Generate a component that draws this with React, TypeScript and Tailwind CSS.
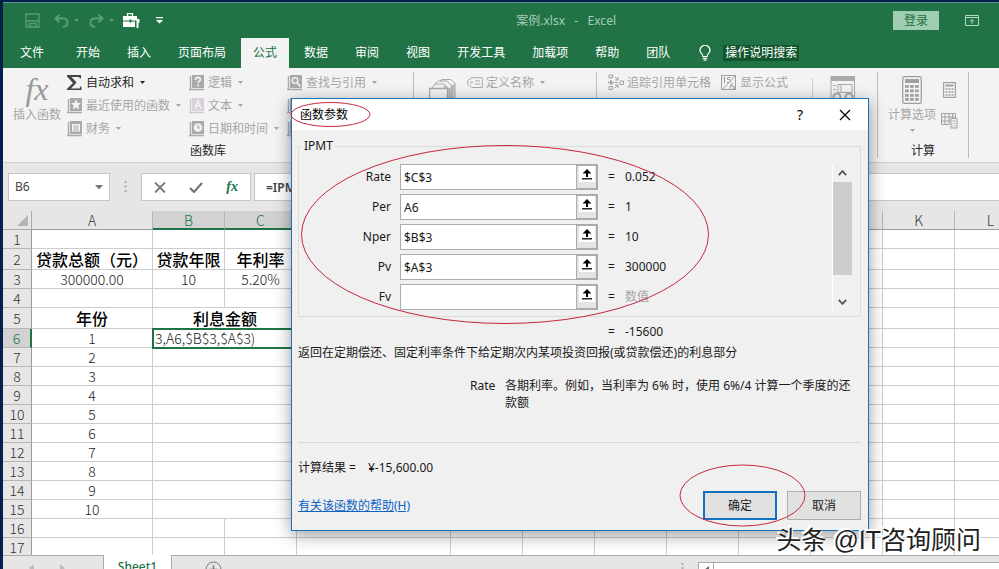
import React from "react";

/* -------------------------------------------------------------------------- */
/*                                   DATA                                     */
/* -------------------------------------------------------------------------- */

const tabs = [
  "开始",
  "插入",
  "页面布局",
  "公式",
  "数据",
  "审阅",
  "视图",
  "开发工具",
  "加载项",
  "帮助",
  "团队",
];

// the last column takes whatever room is left
const columns = [
  { key: "A", width: "w-[121px]" },
  { key: "B", width: "w-[72px]" },
  { key: "C", width: "w-[72px]" },
  { key: "D", width: "w-[154px]" },
  { key: "E", width: "w-[72px]" },
  { key: "F", width: "w-[72px]" },
  { key: "G", width: "w-[72px]" },
  { key: "H", width: "w-[72px]" },
  { key: "I", width: "w-[72px]" },
  { key: "J", width: "w-[72px]" },
  { key: "K", width: "w-[72px]" },
  { key: "L", width: "" },
];

const rows = Array.from({ length: 17 }, (_, i) => i + 1);

const cells: Record<string, string> = {
  A2: "贷款总额（元）",
  B2: "贷款年限",
  C2: "年利率",
  A3: "300000.00",
  B3: "10",
  C3: "5.20%",
  A5: "年份",
  B5: "利息金额",
  A6: "1",
  B6: "3,A6,$B$3,$A$3)",
  A7: "2",
  A8: "3",
  A9: "4",
  A10: "5",
  A11: "6",
  A12: "7",
  A13: "8",
  A14: "9",
  A15: "10",
};

const args = [
  { name: "Rate", value: "$C$3", result: "0.052" },
  { name: "Per", value: "A6", result: "1" },
  { name: "Nper", value: "$B$3", result: "10" },
  { name: "Pv", value: "$A$3", result: "300000" },
  { name: "Fv", value: "", result: "数值" },
];

/* -------------------------------------------------------------------------- */
/*                                   ICONS                                    */
/* -------------------------------------------------------------------------- */

const Caret = ({ className = "" }: { className?: string }) => (
  <svg width="5" height="3" viewBox="0 0 5 3" className={`shrink-0 ${className}`}>
    <path d="M0 0h5L2.5 3z" fill="currentColor" />
  </svg>
);

const Book = ({ children }: { children?: React.ReactNode }) => (
  <svg width="16" height="16" viewBox="0 0 16 16" className="shrink-0">
    <path d="M1.5 1v13.5M0 14.5h15" stroke="#a9a9a9" strokeWidth="1.4" fill="none" />
    <rect x="3" y="0" width="12" height="13" fill="#a9a9a9" />
    {children}
  </svg>
);

const StarBook = () => (
  <Book>
    <path d="M9 1.500l1.500 3.300 3.500.4-2.600 2.400.7 3.600L9 9.400l-3.100 1.800.7-3.600L4 5.200l3.500-.4z" fill="#f3f3f3" />
  </Book>
);

const MoneyBook = () => (
  <Book>
    <rect x="5" y="3" width="8" height="7.5" fill="#f3f3f3" />
    <path d="M6.5 5h5M6.5 7h5M6.5 9h5" stroke="#a9a9a9" strokeWidth="1" />
  </Book>
);

const LogicBook = () => (
  <Book>
    <path d="M6.500 5c0-3.500 5-3.200 5-.5C11.500 6.200 9 6 9 8.200M9 9.500v1.800" stroke="#f3f3f3" strokeWidth="1.700" fill="none" />
  </Book>
);

const TextBook = () => (
  <svg width="16" height="16" viewBox="0 0 16 16" className="shrink-0">
    <path d="M1.5 1v13.500M0 14.500h15" stroke="#d3c8d3" strokeWidth="1.400" fill="none" />
    <rect x="3" y="0" width="12" height="13" fill="#d9d0d9" />
    <path d="M5.800 11L9 2.500l3.200 8.500M7 8h4" stroke="#f3f3f3" strokeWidth="1.300" fill="none" />
  </svg>
);

const ClockBook = () => (
  <Book>
    <circle cx="9" cy="6.500" r="4.300" fill="#f3f3f3" />
    <path d="M9 4v3h2.300" stroke="#a9a9a9" strokeWidth="1.200" fill="none" />
  </Book>
);

const LookupBook = () => (
  <Book>
    <circle cx="8" cy="5.500" r="2.800" stroke="#f3f3f3" strokeWidth="1.300" fill="none" />
    <path d="M10 7.500l3.500 4" stroke="#f3f3f3" strokeWidth="1.600" />
  </Book>
);

const Sigma = () => (
  <svg width="16" height="16" viewBox="0 0 16 16" className="shrink-0">
    <path d="M0 0h14v3.500h-1L12 2H4.500l5 5.500-5.500 6h8.500l1-2h1V15H0v-1.200L6 8 0 1.500z" fill="#444" />
  </svg>
);

const TagIcon = () => (
  <svg width="16" height="12" viewBox="0 0 16 12" fill="none" stroke="#a9a9a9" className="shrink-0">
    <path d="M5 .7h10.300v9.800H5L.7 7.500V3.700z" />
    <circle cx="4.500" cy="5.500" r="1" />
    <path d="M8 4h5M8 7h5" />
  </svg>
);

const TraceIcon = () => (
  <svg width="16" height="17" viewBox="0 0 16 17" fill="none" stroke="#a0a0a0" className="shrink-0">
    <path d="M1 1h3.500v3H1zM1 12.500h3.500v3H1zM12 7h3.500v3.500H12z" />
    <path d="M0 8.500h6M3 6v5" strokeWidth="1.500" />
    <path d="M7 3l3 3M10 3v3H7M7 14l3-3M7 11h3v3M7 8.500h3" />
  </svg>
);

const ShowFormulaIcon = () => (
  <svg width="16" height="16" viewBox="0 0 16 16" fill="none" stroke="#a0a0a0" className="shrink-0">
    <rect x=".5" y=".5" width="14" height="14" />
    <path d="M15 0L1 15" />
    <path d="M3.500 2v6M2 3.500l1.500-1.500M9.500 2.500H6.500v2h2q1 0 1 1.200T8.300 7.500H6" />
    <path d="M8 13.500q1.500 0 2-2.800T12 8M9 10.500h3M11.500 10.500l3 4M14.500 10.500l-3 4" />
  </svg>
);

const NameManagerIcon = () => (
  <svg width="28" height="28" viewBox="0 0 28 28" fill="none" stroke="#a9a9a9">
    <path d="M.5 27V9.500h18V27" strokeWidth="1.500" />
    <path d="M3 9l3-4h9l6 6v13M6 5l3-3h9l5 5v14M11 2l2-1.500h9l4 4V20" />
    <path d="M19 10l7-6v14l-7 8z" fill="#a9a9a9" stroke="none" opacity=".6" />
    <circle cx="16" cy="8" r="1" />
  </svg>
);

const WatchIcon = () => (
  <svg width="26" height="28" viewBox="0 0 26 28" fill="none" stroke="#a9a9a9">
    <rect x="1" y=".5" width="23.500" height="22" />
    <rect x="1" y="0" width="24" height="5" fill="#a9a9a9" stroke="none" />
    <path d="M8 8.500h14v8H8zM3 9.500h3M3 13.500h3M11 9v7" />
    <circle cx="7" cy="21" r="3.500" strokeWidth="2" />
    <circle cx="19" cy="21" r="3.500" strokeWidth="2" />
  </svg>
);

const Calculator = () => (
  <svg width="20" height="28" viewBox="0 0 20 28">
    <rect x=".7" y=".7" width="18.600" height="26.600" rx="2" fill="none" stroke="#a0a0a0" strokeWidth="1.300" />
    <rect x="3" y="3" width="14" height="4" fill="#a0a0a0" />
    {[9, 13.5, 18, 22].map((y) =>
      [3, 8, 13].map((x) => (
        <rect key={`${x}-${y}`} x={x} y={y} width="3.800" height="2.800" fill="#a0a0a0" />
      ))
    )}
  </svg>
);

const SmallCalculator = () => (
  <svg width="13" height="16" viewBox="0 0 13 16" fill="none" stroke="#a0a0a0">
    <rect x=".6" y=".6" width="11.800" height="14.800" strokeWidth="1.200" />
    <path d="M2.500 3.500h8" strokeWidth="2" />
    <path d="M2.500 7h2M5.500 7h2M8.500 7h2M2.500 10h2M5.500 10h2M8.500 10h2M2.500 13h2M5.500 13h2M8.500 13h2" strokeWidth="1.600" />
  </svg>
);

const CalcSheet = () => (
  <svg width="17" height="17" viewBox="0 0 17 17" fill="none" stroke="#a0a0a0">
    <path d="M8 12.500H.5V1.500h14V6M.5 5h14M.5 9h9M4 1.500v11M8 1.500v11M11.500 1.500V6" />
    <rect x="10" y="6.500" width="6" height="9.500" fill="#f3f3f3" />
    <path d="M11.500 9h3M11.500 11.500h1M13.500 11.500h1M11.500 14h1M13.500 14h1" />
  </svg>
);

const UpArrow = () => (
  <svg width="10" height="11" viewBox="0 0 10 11">
    <path d="M5 0l4.500 4.500H6V8H4V4.500H.5z" fill="#000" />
    <path d="M0 9.800h10" stroke="#000" strokeWidth="1.300" />
  </svg>
);

/* -------------------------------------------------------------------------- */
/*                                TITLE + TABS                                */
/* -------------------------------------------------------------------------- */

const TitleBar = () => (
  <header className="flex h-[35px] items-center bg-[#217346] text-[#5b9b77]">
    <div className="flex min-w-0 flex-1 items-center pl-[22px]">
      <button aria-label="保存">
        <svg width="15" height="15" viewBox="0 0 15 15" fill="none" stroke="currentColor" strokeWidth="1.300">
          <path d="M1 1h13v13H1zM1 8h13M4 14v-3.500h7V14M6 12v2" />
        </svg>
      </button>
      <button aria-label="撤消" className="ml-[14px] flex items-center gap-[5px]">
        <svg width="15" height="14" viewBox="0 0 15 14" fill="none" stroke="currentColor" strokeWidth="2">
          <path d="M5.500 .8L1.500 4.500l4 3.800M2 4.500h7.500q4 .3 4 4T9 13" />
        </svg>
        <Caret />
      </button>
      <button aria-label="恢复" className="ml-[10px] flex items-center gap-[5px]">
        <svg width="15" height="14" viewBox="0 0 15 14" fill="none" stroke="currentColor" strokeWidth="2">
          <path d="M9.500 .8l4 3.700-4 3.800M13 4.500H5.500q-4 .3-4 4T6 13" />
        </svg>
        <Caret />
      </button>
      <button aria-label="工具箱" className="ml-[9px] text-white">
        <svg width="17" height="15" viewBox="0 0 17 15" fill="none">
          <path d="M4.500 3V.7h5V3" stroke="currentColor" strokeWidth="1.300" />
          <path d="M0 3h14v4.500H8.500v-1h-2v1H0zM0 8.500h6.500v1h2v-1H12V14H0zM13.500 6h3v3.500h-1V15h-2z" fill="currentColor" />
        </svg>
      </button>
      <button aria-label="自定义快速访问工具栏" className="ml-[16px] text-white">
        <svg width="7" height="7" viewBox="0 0 7 7">
          <path d="M0 0h7v1.300H0zM0 3h7L3.500 6.500z" fill="currentColor" />
        </svg>
      </button>
    </div>
    <h1 className="whitespace-pre text-xs text-[#a5cdb6]">案例.xlsx   -   Excel</h1>
    <div className="flex w-[383px] items-center justify-end">
      <button className="h-[19px] w-[46px] bg-[#9fcdb1] text-xs leading-[19px] text-[#1f6e43]">
        登录
      </button>
      <button aria-label="功能区显示选项" className="mr-[20px] ml-[26px] text-[#b4d6c2]">
        <svg width="14" height="11" viewBox="0 0 14 11" fill="none" stroke="currentColor">
          <path d="M.5 .5h13v10H.5zM.5 2.500h13M7 9V4.500M5 6.500l2-2 2 2" />
        </svg>
      </button>
    </div>
  </header>
);

const TabBar = () => (
  <nav className="flex h-[30px] items-stretch gap-[3px] bg-[#217346] text-xs whitespace-nowrap text-white">
    <button className="px-[17px]">文件</button>
    {tabs.map((t) => (
      <button
        key={t}
        className={t === "公式" ? "bg-[#f3f3f3] px-3 text-[#217346]" : "px-3"}
      >
        {t}
      </button>
    ))}
    <button className="ml-[14px] flex items-center gap-[12px]">
      <svg width="12" height="16" viewBox="0 0 12 16" fill="none" stroke="currentColor" strokeWidth="1.200">
        <path d="M3.800 11.500q0-2-1.700-3.600A4.800 4.800 0 1 1 9.900 7.900Q8.200 9.500 8.200 11.500zM3.800 13.300h4.400M4.500 15.200h3" />
      </svg>
      <span className="bg-[#12562e] px-[2px] leading-4">操作说明搜索</span>
    </button>
  </nav>
);

/* -------------------------------------------------------------------------- */
/*                                   RIBBON                                   */
/* -------------------------------------------------------------------------- */

const Tool = ({
  icon,
  label,
  caret = true,
  active = false,
}: {
  icon: React.ReactNode;
  label?: string;
  caret?: boolean;
  active?: boolean;
}) => (
  <button
    className={`flex h-[23px] items-center gap-[3px] whitespace-nowrap ${
      active ? "text-[#262626]" : "text-[#a6a6a6]"
    }`}
  >
    {icon}
    {label}
    {label && caret && <Caret className="ml-[3px]" />}
  </button>
);

const Divider = () => <div className="my-1 w-px shrink-0 bg-[#bdbdbd]" />;

const Ribbon = () => (
  <section className="flex h-[95px] items-stretch border-b border-[#cfcfcf] bg-[#f3f3f3] text-xs text-[#262626]">
    <div className="w-[410px] shrink-0">
      <div className="flex h-[72px] pt-[3px] pl-[10px]">
        <button className="flex w-12 flex-col items-center text-[#a6a6a6]">
          <span className="h-9 font-['Liberation_Serif',serif] text-[32px] leading-9 text-[#999] italic">
            fx
          </span>
          <span className="leading-4">插入函数</span>
        </button>
        <div className="ml-[6px] w-[122px]">
          <Tool icon={<Sigma />} label="自动求和" active />
          <Tool icon={<StarBook />} label="最近使用的函数" />
          <Tool icon={<MoneyBook />} label="财务" />
        </div>
        <div className="w-[98px]">
          <Tool icon={<LogicBook />} label="逻辑" />
          <Tool icon={<TextBook />} label="文本" />
          <Tool icon={<ClockBook />} label="日期和时间" />
        </div>
        <div>
          <Tool icon={<LookupBook />} label="查找与引用" />
          <Tool icon={<Book />} />
          <Tool icon={<Book />} />
        </div>
      </div>
      <p className="text-center leading-[22px]">函数库</p>
    </div>
    <Divider />
    <div className="flex w-[182px] shrink-0 items-start pl-[15px]">
      <div className="pt-[11px]">
        <NameManagerIcon />
      </div>
      <div className="ml-[10px] pt-[3px]">
        <Tool icon={<TagIcon />} label="定义名称" />
      </div>
    </div>
    <Divider />
    <div className="flex w-[280px] shrink-0 items-start pt-[3px] pl-[11px]">
      <div className="w-[113px]">
        <Tool icon={<TraceIcon />} label="追踪引用单元格" caret={false} />
      </div>
      <div className="w-[91px]">
        <Tool icon={<ShowFormulaIcon />} label="显示公式" caret={false} />
      </div>
      <div className="mt-[7px] h-16 w-px bg-[#cfcfcf]" />
      <div className="pt-[5px] pl-[17px]">
        <WatchIcon />
      </div>
    </div>
    <Divider />
    <div className="w-[90px] shrink-0">
      <div className="flex h-[72px] gap-[5px] pt-2 pl-[10px]">
        <button className="flex w-12 flex-col items-center text-[#a6a6a6]">
          <Calculator />
          <span className="mt-[3px] leading-4">计算选项</span>
          <Caret className="mt-[6px]" />
        </button>
        <div className="flex flex-col items-center gap-[14px] pt-[6px]">
          <SmallCalculator />
          <CalcSheet />
        </div>
      </div>
      <p className="text-center leading-[22px]">计算</p>
    </div>
    <Divider />
  </section>
);

/* -------------------------------------------------------------------------- */
/*                                FORMULA BAR                                 */
/* -------------------------------------------------------------------------- */

const FormulaBar = () => (
  <div className="flex h-12 items-start bg-[#e6e6e6] pt-[10px] pl-[5px] text-xs text-[#444]">
    <div className="flex h-[28px] w-[102px] shrink-0 items-center border border-[#c6c6c6] bg-white px-[6px]">
      <input aria-label="名称框" defaultValue="B6" className="min-w-0 flex-1" />
      <svg width="8" height="5" viewBox="0 0 8 5">
        <path d="M0 0h8L4 4.500z" fill="#777" />
      </svg>
    </div>
    <svg width="3" height="12" viewBox="0 0 3 12" className="mx-[14px] mt-2 shrink-0">
      <path d="M.5 1h2M.5 5.500h2M.5 10h2" stroke="#9a9a9a" strokeWidth="1.500" />
    </svg>
    <div className="flex h-[28px] w-[110px] shrink-0 items-center justify-between border border-[#c6c6c6] bg-white px-[12px]">
      <button aria-label="取消输入">
        <svg width="12" height="11" viewBox="0 0 12 11">
          <path d="M1 .5l10 10M11 .5l-10 10" stroke="#777" strokeWidth="1.800" />
        </svg>
      </button>
      <button aria-label="输入">
        <svg width="14" height="11" viewBox="0 0 14 11">
          <path d="M1 6l4 4 8-9" fill="none" stroke="#777" strokeWidth="2.200" />
        </svg>
      </button>
      <button
        aria-label="插入函数"
        className="font-['Liberation_Serif',serif] text-sm leading-4 font-bold text-[#217346] italic"
      >
        fx
      </button>
    </div>
    <input
      aria-label="编辑栏"
      defaultValue="=IPMT($C$3,A6,$B$3,$A$3)"
      className="ml-[3px] h-[28px] min-w-0 flex-1 border border-r-0 border-[#c6c6c6] bg-white pl-[11px] font-semibold"
    />
  </div>
);

/* -------------------------------------------------------------------------- */
/*                                   SHEET                                    */
/* -------------------------------------------------------------------------- */

const cellClass = (id: string, row: number, col: string) => {
  const base = "overflow-hidden border-b border-[#cdcdcd] p-0 text-center whitespace-nowrap";
  // B and C are merged from row 5 down to row 15
  const side = col === "B" && row >= 5 && row <= 15 ? "" : "border-r";
  if (id === "B6") {
    return `${base} relative border-r bg-white pl-[2px] text-left outline-2 -outline-offset-1 outline-[#217346]`;
  }
  if (row === 2 || row === 5) return `${base} ${side} text-base leading-4 font-medium text-black`;
  return `${base} ${side}`;
};

const Sheet = () => (
  <main className="min-h-0 flex-1 overflow-hidden bg-white">
    <table className="w-full min-w-[1024px] table-fixed border-separate border-spacing-0 font-['Noto_Sans_CJK_SC',sans-serif] text-sm leading-4 font-light text-[#222]">
      <colgroup>
        <col className="w-[29px]" />
        {columns.map((c) => (
          <col key={c.key} className={c.width} />
        ))}
      </colgroup>
      <thead>
        <tr className="h-[19px] bg-[#e6e6e6]">
          <th className="border-r border-b border-[#ababab] p-0">
            <svg width="11" height="11" viewBox="0 0 11 11" className="mr-[3px] ml-auto">
              <path d="M11 0v11H0z" fill="#b4b4b4" />
            </svg>
          </th>
          {columns.map((c) => (
            <th
              key={c.key}
              className={
                c.key === "B" || c.key === "C"
                  ? "border-r border-b-2 border-r-[#b5b5b5] border-b-[#217346] bg-[#d2d2d2] p-0 font-light text-[#217346]"
                  : "border-r border-b border-r-[#b5b5b5] border-b-[#9b9b9b] p-0 font-light text-[#333]"
              }
            >
              {c.key}
            </th>
          ))}
        </tr>
      </thead>
      <tbody>
        {rows.map((r) => (
          <tr key={r} className={r === 2 || r === 5 ? "h-[21px]" : "h-[19px]"}>
            <th
              className={
                r === 6
                  ? "border-r-2 border-b border-r-[#217346] border-b-[#b5b5b5] bg-[#d2d2d2] p-0 font-light text-[#217346]"
                  : "border-r border-b border-r-[#9b9b9b] border-b-[#b5b5b5] bg-[#e6e6e6] p-0 font-light text-[#333]"
              }
            >
              {r}
            </th>
            {columns.map((c) => {
              const id = c.key + r;
              if (c.key === "C" && (r === 5 || r === 6)) return null;
              return (
                <td
                  key={id}
                  colSpan={id === "B5" || id === "B6" ? 2 : 1}
                  className={cellClass(id, r, c.key)}
                >
                  {cells[id]}
                </td>
              );
            })}
          </tr>
        ))}
      </tbody>
    </table>
  </main>
);

const SheetTabs = () => (
  <footer className="h-[14px] shrink-0 overflow-hidden bg-[#e6e6e6] text-xs">
    <div className="flex h-[24px] items-stretch">
      <div className="flex w-[101px] shrink-0 gap-[25px] border-t border-r border-[#ababab] pt-[8px] pl-[26px]">
        <svg width="6" height="8" viewBox="0 0 6 8">
          <path d="M5 0v8L0 4z" fill="#bdbdbd" />
        </svg>
        <svg width="6" height="8" viewBox="0 0 6 8">
          <path d="M0 0v8l5-4z" fill="#bdbdbd" />
        </svg>
      </div>
      <button className="w-[67px] shrink-0 bg-white font-medium text-[#217346]">Sheet1</button>
      <div className="flex flex-1 justify-between border-t border-l border-[#ababab]">
        <button aria-label="新工作表" className="ml-[33px] flex items-start pt-[5px]">
          <svg width="17" height="17" viewBox="0 0 17 17" fill="none" stroke="#777">
            <circle cx="8.500" cy="8.500" r="7.500" />
            <path d="M8.500 4.500v8M4.500 8.500h8" strokeWidth="1.500" />
          </svg>
        </button>
        <svg width="3" height="12" viewBox="0 0 3 12" className="mt-[7px] mr-[14px]">
          <path d="M.5 1h2M.5 5h2M.5 9h2" stroke="#9a9a9a" strokeWidth="1.500" />
        </svg>
      </div>
      <div className="flex w-[301px] shrink-0 border-t border-[#ababab] pt-[6px]">
        <button aria-label="向左滚动" className="flex w-[16px] justify-center border border-[#ababab] bg-white pt-[3px]">
          <svg width="5" height="8" viewBox="0 0 5 8">
            <path d="M5 0v8L0 4z" fill="#666" />
          </svg>
        </button>
        <div className="flex-1 border-t border-[#ababab] bg-white" />
      </div>
    </div>
  </footer>
);

/* -------------------------------------------------------------------------- */
/*                                   DIALOG                                   */
/* -------------------------------------------------------------------------- */

const ArgumentsDialog = () => (
  <div
    role="dialog"
    aria-label="函数参数"
    className="absolute top-[98px] left-[291px] w-[578px] border border-[#1a73bf] bg-[#f0f0f0] text-xs leading-4 text-[#1a1a1a] shadow-[0_4px_16px_rgba(0,0,0,0.4)]"
  >
    <div className="flex h-[31px] items-center bg-white pl-2 text-black">
      <h2 className="flex-1">函数参数</h2>
      <button aria-label="帮助" className="w-4 text-sm">
        ?
      </button>
      <button aria-label="关闭" className="mr-[17px] ml-[31px]">
        <svg width="12" height="12" viewBox="0 0 12 12">
          <path d="M1 1l10 10M11 1L1 11" stroke="#000" strokeWidth="1.200" />
        </svg>
      </button>
    </div>

    <form className="pt-2 pr-[7px] pb-[10px] pl-[6px]" onSubmit={(e) => e.preventDefault()}>
      <fieldset className="border border-[#dcdcdc] pt-[10px] pb-[6px]">
        <legend className="ml-[3px] px-[2px]">IPMT</legend>
        <div className="flex">
          <div className="flex flex-1 flex-col gap-1">
            {args.map((a) => (
              <div key={a.name} className="flex h-[26px] items-center">
                <label htmlFor={a.name} className="w-[92px] text-right">
                  {a.name}
                </label>
                <input
                  id={a.name}
                  defaultValue={a.value}
                  className="ml-[9px] h-[26px] w-[177px] border border-[#ababab] bg-white px-[3px]"
                />
                <button
                  type="button"
                  aria-label={`选择 ${a.name}`}
                  className="flex h-[26px] w-[21px] items-start justify-center border-2 border-l-0 border-[#ababab] bg-[#e4e4e4]"
                >
                  <span className="flex h-4 w-4 items-center justify-center bg-white">
                    <UpArrow />
                  </span>
                </button>
                <span className="ml-[10px] w-[17px]">=</span>
                <output className={a.value ? "" : "text-[#a6a6a6]"}>{a.result}</output>
              </div>
            ))}
          </div>
          <div className="mr-2 flex w-5 flex-col items-center border-l border-white">
            <svg width="9" height="6" viewBox="0 0 9 6" className="my-[6px]">
              <path d="M.8 5.200l3.700-4 3.700 4" fill="none" stroke="#555" strokeWidth="1.800" />
            </svg>
            <div className="h-[93px] w-full bg-[#cdcdcd]" />
            <svg width="9" height="6" viewBox="0 0 9 6" className="mt-auto mb-[5px]">
              <path d="M.8 .8l3.700 4 3.700-4" fill="none" stroke="#555" strokeWidth="1.800" />
            </svg>
          </div>
        </div>
      </fieldset>

      <p className="mt-[7px] flex pl-[310px]">
        <span className="w-[17px]">=</span>
        -15600
      </p>
      <p className="mt-[5px]">返回在定期偿还、固定利率条件下给定期次内某项投资回报(或贷款偿还)的利息部分</p>
      <div className="mt-4 flex gap-2 pl-[172px] leading-[17px]">
        <span className="w-[27px]">Rate</span>
        <p className="flex-1">各期利率。例如，当利率为 6% 时，使用 6%/4 计算一个季度的还款额</p>
      </div>
      <hr className="mt-[31px] border-[#d8d8d8]" />
      <p className="mt-[17px] flex">
        <span className="w-[70px] whitespace-pre">计算结果 =</span>
        ¥-15,600.00
      </p>
      <div className="mt-[15px] flex items-center gap-[10px]">
        <a href="#help" className="mr-auto text-[#0b63c4] underline">
          有关该函数的帮助(H)
        </a>
        <button type="submit" className="h-[29px] w-[74px] border-2 border-[#1370c0] bg-[#e1e1e1]">
          确定
        </button>
        <button type="button" className="h-[29px] w-[74px] border border-[#adadad] bg-[#e1e1e1]">
          取消
        </button>
      </div>
    </form>

    {/* red pen marks */}
    <svg
      className="pointer-events-none absolute -top-px -left-px overflow-visible"
      width="578"
      height="433"
      viewBox="0 0 578 433"
      fill="none"
      stroke="#c4283c"
    >
      <ellipse cx="39.500" cy="16.500" rx="39.500" ry="12" />
      <ellipse cx="214" cy="136.500" rx="203.500" ry="89" />
      <ellipse cx="451.500" cy="397.500" rx="62.500" ry="30.500" />
    </svg>
  </div>
);

export default function App() {
  return (
    <div className="relative flex h-screen flex-col overflow-hidden bg-[#04204a] pt-[2px] pl-[3px] font-['Noto_Sans','Noto_Sans_CJK_SC',sans-serif]">
      <div className="flex min-h-0 flex-1 flex-col border-t border-[#5d93a0]">
        <TitleBar />
        <TabBar />
        <Ribbon />
        <FormulaBar />
        <Sheet />
        <SheetTabs />
      </div>
      <ArgumentsDialog />
      <p className="absolute right-[18px] bottom-[13px] font-['Liberation_Sans','Noto_Sans_CJK_SC',sans-serif] text-[25px] leading-8 text-[#222] [text-shadow:-1px_-1px_0_#fff,-2px_-2px_0_#fff,1px_1px_0_#fff]">
        头条 @IT咨询顾问
      </p>
    </div>
  );
}
